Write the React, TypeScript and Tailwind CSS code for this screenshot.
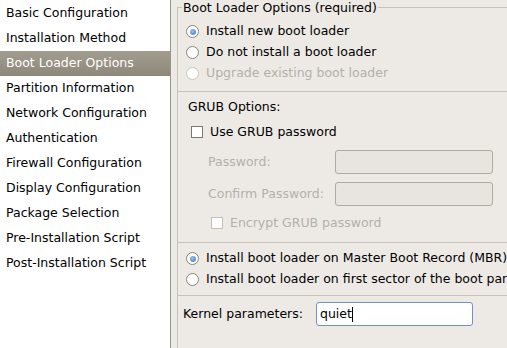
import React from "react";

const sections = [
  "Basic Configuration",
  "Installation Method",
  "Boot Loader Options",
  "Partition Information",
  "Network Configuration",
  "Authentication",
  "Firewall Configuration",
  "Display Configuration",
  "Package Selection",
  "Pre-Installation Script",
  "Post-Installation Script",
];

type RadioProps = {
  label: string;
  checked?: boolean;
  disabled?: boolean;
};

const Radio: React.FC<RadioProps> = ({ label, checked, disabled }) => {
  return (
    <div className="flex h-[21px] items-center">
      <span
        className={`flex h-[13px] w-[13px] shrink-0 items-center justify-center rounded-full border bg-white ${
          disabled ? "border-[#c9c5bd] bg-[#eeebe7]" : "border-[#8a8579]"
        }`}
      >
        {checked && (
          <span className="h-[6px] w-[6px] rounded-full bg-[radial-gradient(circle_at_40%_35%,#9cc0ee,#3d72c4)]" />
        )}
      </span>
      <span
        className={`ml-[7px] whitespace-nowrap ${
          disabled ? "text-[#b4b0a8]" : "text-black"
        }`}
      >
        {label}
      </span>
    </div>
  );
};

type CheckProps = {
  label: string;
  disabled?: boolean;
};

const Check: React.FC<CheckProps> = ({ label, disabled }) => {
  return (
    <div className="flex h-[20px] items-center">
      <span
        className={`h-[12px] w-[12px] shrink-0 border bg-white ${
          disabled ? "border-[#c4c0b8] bg-[#eeebe7]" : "border-[#7d786d]"
        }`}
      />
      <span
        className={`ml-[7px] whitespace-nowrap ${
          disabled ? "text-[#b4b0a8]" : "text-black"
        }`}
      >
        {label}
      </span>
    </div>
  );
};

const Separator = () => <div className="h-px bg-[#c6c2ba]" />;

export default function App() {
  const active = "Boot Loader Options";

  return (
    <div
      className="flex h-[348px] w-[507px] overflow-hidden bg-[#edeae6] text-[12.5px] text-black"
      style={{ fontFamily: '"DejaVu Sans", sans-serif' }}
    >
      {/* section list */}
      <div className="h-full w-[171px] shrink-0 border-r border-[#98948b] bg-white pt-px">
        {sections.map((s) => (
          <div
            key={s}
            className={`flex h-[25px] items-center pl-[6px] whitespace-nowrap ${
              s === active
                ? "bg-[linear-gradient(#a39d90,#8e887b)] text-white"
                : "text-black"
            }`}
          >
            {s}
          </div>
        ))}
      </div>

      {/* boot loader frame */}
      <fieldset className="ml-[6px] min-w-0 flex-1 overflow-hidden border-l border-t border-[#c6c2ba] pr-0">
        <legend className="ml-[4px] px-[1px] leading-[15px] text-black">
          Boot Loader Options (required)
        </legend>

        <div className="pl-[8px] pt-[6px]">
          <Radio label="Install new boot loader" checked />
          <Radio label="Do not install a boot loader" />
          <Radio label="Upgrade existing boot loader" disabled />
        </div>

        <div className="mt-[7px]">
          <Separator />
        </div>

        <div className="mt-[6px] flex h-[18px] items-center pl-[10px]">
          GRUB Options:
        </div>

        <div className="mt-[6px] pl-[13px]">
          <Check label="Use GRUB password" />
        </div>

        <div className="mt-[8px] flex flex-col gap-[8px] pl-[30px]">
          <div className="flex h-[24px] items-center">
            <span className="w-[127px] text-[#b4b0a8]">Password:</span>
            <div className="h-[24px] w-[158px] rounded-[3px] border border-[#b1aa9d] bg-[#e8e5e0]" />
          </div>
          <div className="flex h-[24px] items-center">
            <span className="w-[127px] whitespace-nowrap text-[#b4b0a8]">Confirm Password:</span>
            <div className="h-[24px] w-[158px] rounded-[3px] border border-[#b1aa9d] bg-[#e8e5e0]" />
          </div>
        </div>

        <div className="mt-[7px] pl-[33px]">
          <Check label="Encrypt GRUB password" disabled />
        </div>

        <div className="mt-[9px]">
          <Separator />
        </div>

        <div className="mt-[5px] pl-[8px]">
          <Radio label="Install boot loader on Master Boot Record (MBR)" checked />
          <Radio label="Install boot loader on first sector of the boot partition" />
        </div>

        <div className="mt-[5px]">
          <Separator />
        </div>

        <div className="mt-[6px] flex h-[24px] items-center pl-[5px]">
          <span className="w-[133px] whitespace-nowrap">Kernel parameters:</span>
          <div className="flex h-[24px] w-[157px] items-center rounded-[3px] border border-[#6f93c5] bg-white pl-[3px]">
            quiet
            <span className="h-[15px] w-px bg-black" />
          </div>
        </div>
      </fieldset>
    </div>
  );
}
